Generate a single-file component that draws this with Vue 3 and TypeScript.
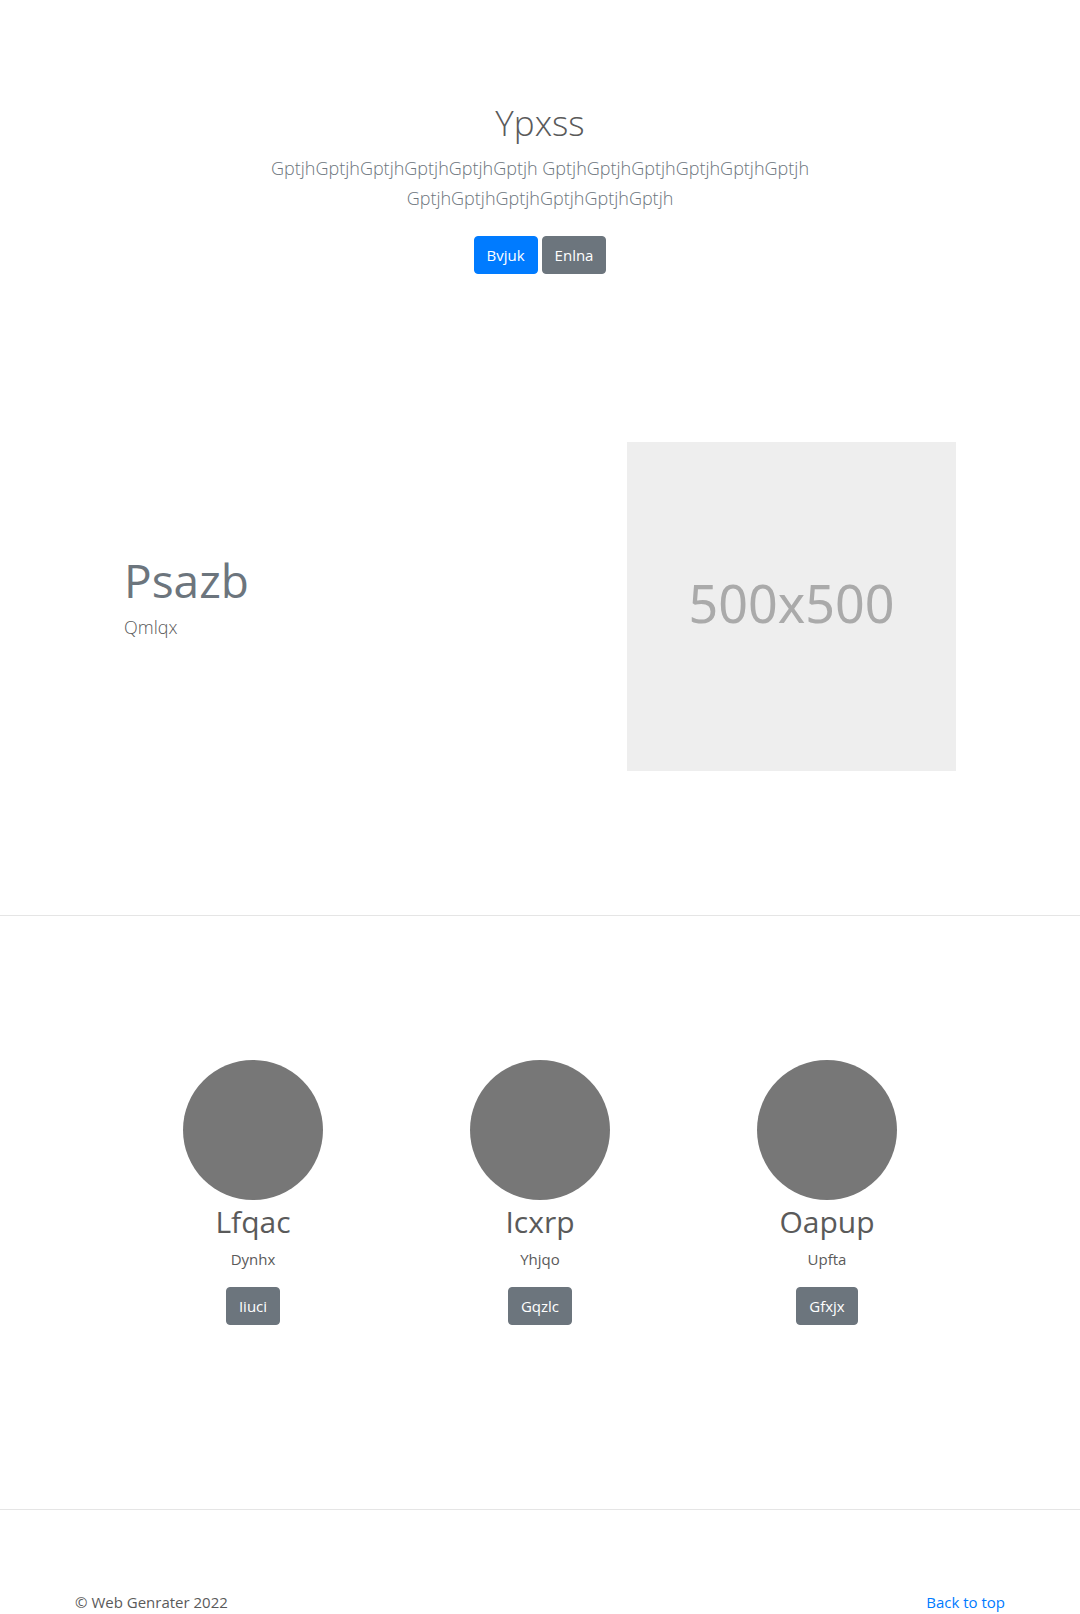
<script setup lang="ts">
interface Feature {
  title: string
  text: string
  action: string
}

const leadWord = 'Gptjh'.repeat(6)
const lead = [leadWord, leadWord, leadWord].join(' ')

const features: Feature[] = [
  { title: 'Lfqac', text: 'Dynhx', action: 'Iiuci' },
  { title: 'Icxrp', text: 'Yhjqo', action: 'Gqzlc' },
  { title: 'Oapup', text: 'Upfta', action: 'Gfxjx' },
]
</script>

<template>
  <div class="page">
    <main>
      <section class="hero">
        <h1>Ypxss</h1>
        <p class="lead">{{ lead }}</p>
        <div class="actions">
          <button type="button" class="btn primary">Bvjuk</button>
          <button type="button" class="btn">Enlna</button>
        </div>
      </section>

      <section class="featurette">
        <div class="copy">
          <h2>Psazb</h2>
          <p>Qmlqx</p>
        </div>
        <div class="placeholder">500x500</div>
      </section>

      <hr />

      <section class="columns">
        <article v-for="feature in features" :key="feature.title" class="column">
          <svg class="avatar" viewBox="0 0 140 140" aria-hidden="true">
            <circle cx="70" cy="70" r="70" fill="#777" />
          </svg>
          <h2>{{ feature.title }}</h2>
          <p>{{ feature.text }}</p>
          <button type="button" class="btn">{{ feature.action }}</button>
        </article>
      </section>

      <hr />
    </main>

    <footer class="footer">
      <span>© Web Genrater 2022</span>
      <a href="#">Back to top</a>
    </footer>
  </div>
</template>

<style>
body {
  margin: 0;
  background: #fff;
}
</style>

<style scoped>
.page {
  color: #5a5a5a;
  font-family: 'Segoe UI', 'Open Sans', 'Noto Sans', sans-serif;
  font-size: 15px;
  line-height: 24px;
}

h1,
h2,
p {
  margin: 0;
}

hr {
  height: 1px;
  margin: 0;
  border: 0;
  background: #e5e5e5;
}

.hero {
  box-sizing: border-box;
  max-width: 608px;
  margin: 0 auto;
  padding: 96px 16px;
  text-align: center;
}

.hero h1 {
  margin-bottom: 4px;
  font-size: 35px;
  font-weight: 300;
  line-height: 53px;
}

.lead {
  color: #6c757d;
  font-size: 18px;
  font-weight: 300;
  line-height: 30px;
}

.actions {
  display: flex;
  justify-content: center;
  gap: 4px;
  margin-top: 23px;
}

.btn {
  box-sizing: border-box;
  height: 38px;
  padding: 0 12px;
  border: 1px solid #6c757d;
  border-radius: 4px;
  background: #6c757d;
  color: #fff;
  font: inherit;
  cursor: pointer;
}

.btn.primary {
  border-color: #007bff;
  background: #007bff;
}

.featurette {
  display: flex;
  align-items: center;
  justify-content: space-between;
  max-width: 832px;
  margin: 0 auto;
  padding: 72px 0 144px;
}

.copy h2 {
  margin-bottom: 8px;
  color: #6c757d;
  font-size: 46px;
  font-weight: 400;
  line-height: 48px;
}

.copy p {
  margin-bottom: 16px;
  font-size: 18px;
  font-weight: 300;
  line-height: 30px;
}

.placeholder {
  box-sizing: border-box;
  display: flex;
  align-items: center;
  justify-content: center;
  width: 329px;
  aspect-ratio: 1;
  padding-bottom: 8px;
  background: #eee;
  color: #aaa;
  font-family: 'Noto Sans', sans-serif;
  font-size: 52px;
  line-height: 60px;
}

.columns {
  display: grid;
  grid-template-columns: repeat(3, 1fr);
  max-width: 861px;
  margin: 0 auto;
  padding: 144px 0 184px;
}

.column {
  display: flex;
  flex-direction: column;
  align-items: center;
}

.avatar {
  width: 140px;
  height: 140px;
}

.column h2 {
  margin-bottom: 4px;
  font-size: 30px;
  font-weight: 400;
  line-height: 43px;
}

.column p {
  margin-bottom: 16px;
}

.footer {
  display: flex;
  justify-content: space-between;
  max-width: 930px;
  margin: 0 auto;
  padding-top: 80px;
}

.footer a {
  color: #007bff;
  text-decoration: none;
}
</style>
